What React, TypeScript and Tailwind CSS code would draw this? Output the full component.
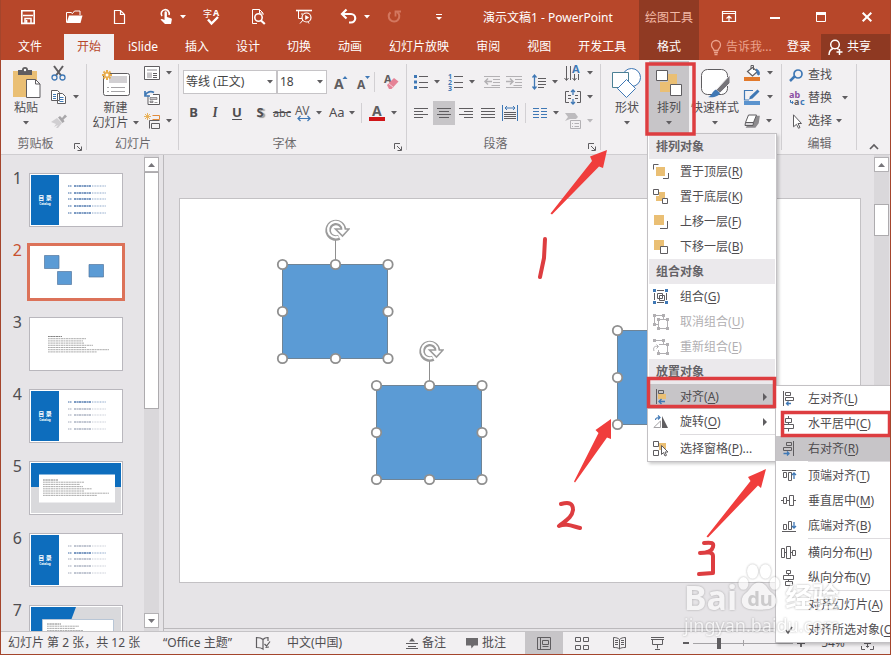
import type { ReactNode } from "react";

const G = "#5f5d60";
const B = "#3f78b5";
const Y = "#eabf74";

type IcoProps = { w: number; h: number; children: ReactNode; stroke?: string; className?: string };

function Ico({ w, h, children, stroke = G, className = "" }: IcoProps) {
  return (
    <svg width={w} height={h} viewBox={`0 0 ${w} ${h}`} fill="none" stroke={stroke} strokeWidth="1" className={`shrink-0 overflow-visible ${className}`} aria-hidden="true">
      {children}
    </svg>
  );
}

/* A letter that is part of an icon. */
function Letter({ x, y, size, color = G, bold = true, children }: { x: number; y: number; size: number; color?: string; bold?: boolean; children: string }) {
  return (
    <text x={x} y={y} fontSize={size} fontWeight={bold ? 700 : 400} fill={color} stroke="none">
      {children}
    </text>
  );
}

function Caret({ color = "#5f5d60" }: { color?: string }) {
  return (
    <svg width="6" height="4" viewBox="0 0 6 4" className="shrink-0" aria-hidden="true">
      <path d="M0 0h6L3 3.5z" fill={color} />
    </svg>
  );
}

/* ---------- title bar ---------- */

const quick: { name: string; icon: ReactNode; caret?: boolean }[] = [
  {
    name: "保存",
    icon: (
      <Ico w={20} h={18} stroke="#fff">
        <path d="M3.8 2.8h12.4v12.6H3.8z" strokeWidth="1.6" />
        <path d="M5 7.5h10M7 15v-4.5h6V15M8.6 12v3" strokeWidth="1.5" />
      </Ico>
    ),
  },
  {
    name: "打开",
    icon: (
      <Ico w={20} h={18} stroke="#fff">
        <path d="M2.5 14.5V4.5h5l1 1.5M8.5 5.5 10.5 3h5.5v4" />
        <path d="M2.5 15 5 7.500h13.500L16.500 15z" fill="#fff" stroke="none" />
      </Ico>
    ),
  },
  {
    name: "新建",
    icon: (
      <Ico w={20} h={18} stroke="#fff">
        <path d="M4.500 2.500h6l4 4v9h-10zM10.500 2.500v4h4" strokeWidth="1.200" />
      </Ico>
    ),
  },
  {
    name: "触摸/鼠标模式",
    caret: true,
    icon: (
      <Ico w={20} h={18} stroke="#fff">
        <path d="M6 8a4 4 0 1 1 7-1" strokeWidth="1.600" />
        <path d="M8.500 4.500a1.200 1.200 0 0 1 2.400 0V9l4 1.300c.8.3 1 .8.900 1.500L15 16H9l-4.500-4.500c.8-1 2-.8 4 .6z" fill="#fff" stroke="none" />
      </Ico>
    ),
  },
  {
    name: "拼写检查",
    icon: (
      <Ico w={20} h={18} stroke="#fff">
        <Letter x={1} y={9} size={9} color="#fff" bold={false}>字</Letter>
        <Letter x={11} y={8} size={9} color="#fff">A</Letter>
        <path d="m6 11.500 3.500 4 6.500-6.500" strokeWidth="2.400" />
      </Ico>
    ),
  },
  {
    name: "打印预览",
    icon: (
      <Ico w={20} h={18} stroke="#fff">
        <path d="M9 15.500H4.500v-14h7l3.500 3.500v2M11.500 1.500V5H15" />
        <circle cx="10.500" cy="9.500" r="3.700" strokeWidth="1.600" />
        <path d="m13 12.500 3.800 3.500" strokeWidth="2.200" />
      </Ico>
    ),
  },
  {
    name: "从头开始放映",
    icon: (
      <Ico w={20} h={18} stroke="#fff">
        <path d="M2 2.500h16" strokeWidth="1.600" />
        <path d="M4.500 3v7.500H8M6 15.500l3-3.500M7 6h2M15 15.500l-1-1.500" />
        <circle cx="12.500" cy="9.500" r="4.500" strokeWidth="1.200" />
        <path d="M11.200 7v5l4-2.500z" fill="#fff" stroke="none" />
      </Ico>
    ),
  },
  {
    name: "撤消",
    caret: true,
    icon: (
      <Ico w={20} h={18} stroke="#fff">
        <path d="M1.500 6h9.500a4 4 0 0 1 0 8.500H9M6.500 1.500 2 6l4.500 4.500" strokeWidth="2.200" />
      </Ico>
    ),
  },
  {
    name: "重复",
    icon: (
      <Ico w={20} h={18} stroke="#d3775f">
        <path d="M11 3.800a5.300 5.300 0 1 1-6.500.4" strokeWidth="2" />
        <path d="M9.500 8.500v-5H15" strokeWidth="1.800" />
      </Ico>
    ),
  },
  {
    name: "自定义快速访问工具栏",
    icon: (
      <Ico w={20} h={18} stroke="#fff">
        <path d="M4 6.500h6" />
        <path d="M4 9h6l-3 3z" fill="#fff" stroke="none" />
      </Ico>
    ),
  },
];

const tabs = ["iSlide", "插入", "设计", "切换", "动画", "幻灯片放映", "审阅", "视图", "开发工具"];

function Header() {
  return (
    <header className="flex h-[60px] shrink-0 bg-[#b7472a] text-white">
      <div className="flex min-w-0 flex-1 flex-col">
        <div className="flex h-[34px] items-center pl-1">
          {quick.map((q) => (
            <button key={q.name} aria-label={q.name} className="flex h-8 w-[46px] shrink-0 items-center gap-1 pl-[13px]">
              {q.icon}
              {q.caret && <Caret color="#fff" />}
            </button>
          ))}
          <h1 className="pt-0.5 pl-[18px] whitespace-nowrap">演示文稿1 - PowerPoint</h1>
        </div>
        <nav className="flex flex-1 gap-px whitespace-nowrap">
          <button className="w-[62px] shrink-0 pr-1">文件</button>
          <button className="shrink-0 bg-[#f2f0f2] px-[13px] text-[#b7472a]">开始</button>
          {tabs.map((t) => (
            <button key={t} className="shrink-0 px-[13px]">
              {t}
            </button>
          ))}
        </nav>
      </div>
      <div className="flex w-[60px] shrink-0 flex-col bg-[#903a23]">
        <span className="flex h-[34px] items-center justify-center pt-0.5 whitespace-nowrap text-[#f3b9a6]">绘图工具</span>
        <button className="flex-1">格式</button>
      </div>
      <div className="flex w-[191px] shrink-0 flex-col">
        <div className="flex h-[34px] items-center pl-[7px]">
          <button aria-label="功能区显示选项" className="flex w-[46px] justify-center">
            <Ico w={14} h={12} stroke="#fff">
              <path d="M.5.500h13v10H.500zM.500 2.500h13M7 10V5M4.500 7.500 7 5l2.500 2.500" strokeWidth="1.200" />
            </Ico>
          </button>
          <button aria-label="最小化" className="flex w-[46px] justify-center">
            <Ico w={10} h={4} stroke="#fff"><path d="M0 3h10" strokeWidth="2" /></Ico>
          </button>
          <button aria-label="最大化" className="flex w-[46px] justify-center">
            <Ico w={10} h={10} stroke="#fff"><path d="M.500 1h9v8.500h-9z" /><path d="M0 1.500h10" strokeWidth="3" /></Ico>
          </button>
          <button aria-label="关闭" className="flex w-[45px] justify-center">
            <Ico w={10} h={10} stroke="#fff"><path d="m.7.700 8.600 8.600M9.300.700.700 9.300" strokeWidth="2" /></Ico>
          </button>
        </div>
        <div className="flex flex-1 items-stretch">
          <button className="flex items-center gap-1 pl-[11px] whitespace-nowrap text-[#eba28c]">
            <Ico w={12} h={15} stroke="#eba28c">
              <path d="M4 10.500C4 8.500 1.500 8 1.500 5a4.500 4.500 0 0 1 9 0c0 3-2.500 3.500-2.500 5.500zM4 12.500h4M4.500 14.500h3" strokeWidth="1.300" />
            </Ico>
            告诉我...
          </button>
          <button className="ml-auto px-2.5 whitespace-nowrap">登录</button>
          <button className="flex w-[69px] items-center gap-1 bg-[#8e3922] pl-[7px] whitespace-nowrap">
            <Ico w={15} h={17} stroke="#fff">
              <circle cx="7" cy="5.500" r="4.300" strokeWidth="1.500" />
              <path d="M1 16c0-3.500 1.500-5.500 4-6.500M9 9l1.500 1.500M11.500 10v6M8.500 13h6" strokeWidth="1.500" />
            </Ico>
            共享
          </button>
        </div>
      </div>
    </header>
  );
}

/* ---------- ribbon ---------- */

function Group({ label, width, launcher, bare, children }: { label: string; width: string; launcher?: boolean; bare?: boolean; children: ReactNode }) {
  return (
    <section aria-label={label} className={`relative flex shrink-0 flex-col ${width}`}>
      <div className="flex h-[74px] pt-px">{children}</div>
      <div className="flex h-5 items-center text-[#6a686b]">
        {!bare && <span className="flex-1 text-center">{label}</span>}
        {launcher && (
          <button aria-label={`${label}设置`} className="flex w-[17px] pt-1.5 pl-1">
            <Ico w={8} h={8}>
              <path d="M.500 6V.500H6M3 3l4 4M7.500 3.500v4h-4" />
            </Ico>
          </button>
        )}
      </div>
      <div className="absolute top-1 right-0 h-[86px] w-px bg-[#d2d0d3]" />
    </section>
  );
}

function Tool({ name, icon, caret, w = "w-auto", on, dim }: { name: string; icon: ReactNode; caret?: boolean; w?: string; on?: boolean; dim?: boolean }) {
  return (
    <button aria-label={name} className={`flex h-6 shrink-0 items-center gap-1.5 ${w} ${on ? "justify-center bg-[#c7c5c8]" : ""}`}>
      {icon}
      {caret && <Caret color={dim ? "#b9b7ba" : "#5f5d60"} />}
    </button>
  );
}

function Big({ icon, text, last, w, on }: { icon: ReactNode; text: string; last?: string; w: string; on?: boolean }) {
  return (
    <button className={`flex shrink-0 flex-col items-center pt-1 leading-[15px] whitespace-nowrap ${w} ${on ? "bg-[#c7c5c8]" : ""}`}>
      <span className="flex h-[35px] items-center">{icon}</span>
      <span>{text}</span>
      <span className="flex h-[15px] items-center gap-1">
        {last}
        <Caret />
      </span>
    </button>
  );
}

const sun = "M5 0v10M0 5h10M1.500 1.500l7 7M8.500 1.500l-7 7";

function Lines({ rows, stroke = G }: { rows: [number, number][]; stroke?: string }) {
  return (
    <Ico w={14} h={12} stroke={stroke}>
      {rows.map(([a, b], i) => (
        <path key={i} d={`M${a} ${i * 3 + 1.5}H${b}`} />
      ))}
    </Ico>
  );
}

function Divider() {
  return <div className="h-5 w-px shrink-0 bg-[#d2d0d3]" />;
}

function Ribbon() {
  return (
    <div className="flex h-[95px] shrink-0 border-b border-[#cfcdd0] bg-[#f2f0f2]">
      <Group label="剪贴板" width="w-[86px]" launcher>
        <Big
          w="w-[50px]"
          text="粘贴"
          icon={
            <Ico w={30} h={31}>
              <path d="M2 4h24v26H2z" fill={Y} stroke="none" />
              <path d="M7 3h4a3 3 0 0 1 6 0h4v5H7z" fill={G} stroke="none" />
              <circle cx="14" cy="3" r="1.200" fill="#fff" stroke="none" />
              <path d="M15.500 12.500h9l4.500 4.500v13.500H15.500z" fill="#fff" />
              <path d="M24.500 12.500V17H29" />
            </Ico>
          }
        />
        <div className="flex flex-col">
          <Tool name="剪切" icon={
            <Ico w={16} h={16}>
              <path d="M3 1l7 9.500M12 1 5 10.500" strokeWidth="2" />
              <circle cx="3.500" cy="12.500" r="2.500" stroke={B} strokeWidth="1.300" />
              <circle cx="11.500" cy="12.500" r="2.500" stroke={B} strokeWidth="1.300" />
            </Ico>
          } />
          <Tool name="复制" caret icon={
            <Ico w={16} h={14}>
              <path d="M.500.500h6l2 2v8h-8zM6.500 3.500h5l3 3v7h-8z" fill="#fff" />
              <path d="M2 4.500h3M2 6.500h3M2 8.500h3M8.500 7.500h4M8.500 9.500h4M8.500 11.500h4" stroke={B} />
            </Ico>
          } />
          <Tool name="格式刷" icon={
            <Ico w={16} h={14} stroke="none">
              <path d="M0 8 6 4l5 5-4 5H5l2-3-4 2 2-3z" fill="#d0ced1" />
              <path d="m7 3.500 2-1.500 2 2 3-3.500 2 2-3.500 3 1 2-2 1.500z" fill="#a9a7aa" />
            </Ico>
          } />
        </div>
      </Group>

      <Group label="幻灯片" width="w-[92px]">
        <Big
          w="w-[57px]"
          text="新建"
          last="幻灯片"
          icon={
            <Ico w={30} h={28}>
              <rect x="2.500" y="4.500" width="26" height="22" rx="2" fill="#fff" />
              <path d="M8 7h18v7H8z" fill="#d2d0d3" stroke="none" />
              <path d="M6 18.500h2M10 18.500h14M6 22.500h2M10 22.500h14" stroke="#a5a3a6" />
              <path d={sun} stroke="#e9ad4d" strokeWidth="2" transform="translate(1 1)" />
              <circle cx="6" cy="6" r="1.500" fill="#fff" stroke="none" />
            </Ico>
          }
        />
        <div className="flex flex-col">
          <Tool name="版式" caret icon={
            <Ico w={16} h={14}>
              <path d="M.500.500h15v13H.500z" fill="#fff" />
              <path d="M3 3h10v2H3zM3 6.500h5V12H3z" fill="#c7c5c8" stroke="none" />
              <path d="M9 7.500h4M9 9.500h4M9 11.500h4" />
            </Ico>
          } />
          <Tool name="重置" icon={
            <Ico w={16} h={15}>
              <path d="M4 5.500V14.500h11.500V4.500H9" fill="#fff" />
              <path d="M6 7.500h7v2H6zM6 11h3v1.500H6zM10.500 12.500h3" fill="#c7c5c8" strokeWidth=".6" />
              <path d="M1 5.500C3 1.500 7 1 10 2.500M1 1v5h5" stroke={B} strokeWidth="1.700" />
            </Ico>
          } />
          <Tool name="节" caret icon={
            <Ico w={16} h={16}>
              <path d="M8.500 2.500h7v4h-7" stroke="#df8b3c" />
              <path d="M5.500 7.500v8M5.500 7.500h10M7.500 10.500h8v5h-8z" />
              <path d="M3.500 0v7M0 3.500h7M1 1l5 5M6 1 1 6" stroke="#e9ad4d" strokeWidth=".9" />
            </Ico>
          } />
        </div>
      </Group>

      <Group label="字体" width="w-[228px]" launcher>
        <div className="flex w-full flex-col pt-[9px] pl-1">
          <div className="flex h-6 items-center">
            <label className="relative flex">
              <select aria-label="字体" className="h-6 w-[94px] appearance-none border border-[#c6c4c7] bg-white pl-0.5 text-[#444]">
                <option>等线 (正文)</option>
              </select>
              <span className="pointer-events-none absolute top-2.5 right-1"><Caret /></span>
            </label>
            <label className="relative flex">
              <select aria-label="字号" className="h-6 w-[50px] appearance-none border border-[#c6c4c7] bg-white pl-0.5 text-[#444]">
                <option>18</option>
              </select>
              <span className="pointer-events-none absolute top-2.5 right-1"><Caret /></span>
            </label>
            <button aria-label="增大字号" className="flex w-[25px] justify-center pl-1">
              <Ico w={14} h={15}>
                <Letter x={0} y={14} size={14}>A</Letter>
                <path d="M8.500 4h5L11 1z" fill={B} stroke="none" />
              </Ico>
            </button>
            <button aria-label="减小字号" className="flex w-[23px] justify-center">
              <Ico w={13} h={15}>
                <Letter x={0} y={14} size={12}>A</Letter>
                <path d="M8 1h5l-2.500 3z" fill={B} stroke="none" />
              </Ico>
            </button>
            <Divider />
            <button aria-label="清除格式" className="flex w-8 justify-center">
              <Ico w={15} h={16}>
                <Letter x={0} y={9} size={11}>A</Letter>
                <path d="M3 11 10 4l4.500 3.500L7.500 15H5z" fill="#e58296" stroke="none" />
                <path d="m4.500 9.500 5 4" stroke="#f6d3da" />
              </Ico>
            </button>
          </div>
          <div className="mt-[7px] flex h-6 items-center text-[13px] font-bold">
            <button className="w-[21px]">B</button>
            <button className="w-[22px] font-serif italic">I</button>
            <button className="w-[22px] underline underline-offset-2">U</button>
            <button className="w-[24px] text-shadow-[2px_1px_1px_#999]">S</button>
            <button className="w-[20px] text-[11px] font-normal line-through">abc</button>
            <button aria-label="字符间距" className="flex w-[33px] items-center justify-center gap-1">
              <Ico w={16} h={16}>
                <Letter x={-1} y={10} size={12} bold={false}>AV</Letter>
                <path d="M2 13.500h12M11.500 11l2.500 2.500-2.500 2.500M4.500 11 2 13.500 4.500 16" stroke={B} strokeWidth="1.200" />
              </Ico>
              <Caret />
            </button>
            <button className="flex w-[36px] items-center gap-1 pl-1 font-normal">Aa<Caret /></button>
            <Divider />
            <button aria-label="字体颜色" className="flex items-center gap-1.5 pl-[7px]">
              <Ico w={16} h={15}>
                <Letter x={3} y={10} size={14}>A</Letter>
                <path d="M0 11h16v4H0z" fill="#d01518" stroke="none" />
              </Ico>
              <Caret />
            </button>
          </div>
        </div>
      </Group>

      <Group label="段落" width="w-[194px]" launcher>
        <div className="flex w-[158px] shrink-0 flex-col pt-[9px] pl-[7px]">
          <div className="flex h-6 items-center">
            <Tool name="项目符号" caret w="w-[34px]" icon={
              <Ico w={14} h={16}>
                <path d="M5 2.500h9M5 8.500h9M5 13.500h9" />
                <path d="M0 1h3v3H0zM0 6.500h3v3H0zM0 12h3v3H0z" fill={B} stroke="none" />
              </Ico>
            } />
            <Tool name="编号" caret w="w-[36px]" icon={
              <Ico w={15} h={16}>
                <path d="M6 2.500h9M6 8.500h9M6 13.500h9" />
                <Letter x={0} y={5} size={7} color={B}>1</Letter>
                <Letter x={0} y={11} size={7} color={B}>2</Letter>
                <Letter x={0} y={17} size={7} color={B}>3</Letter>
              </Ico>
            } />
            <Tool name="减少缩进" w="w-[22px]" icon={
              <Ico w={16} h={14} stroke="#b3b1b4">
                <path d="M0 1.500h16M9 4.500h7M9 7.500h7M0 12.500h16M7.500 10.500h8.500" />
                <path d="M1 6.500h7M4 3.500l-3 3 3 3" strokeWidth="1.500" />
              </Ico>
            } />
            <Tool name="增加缩进" w="w-[26px]" icon={
              <Ico w={16} h={14} stroke="#b3b1b4">
                <path d="M0 1.500h16M9 4.500h7M9 7.500h7M0 12.500h16M7.500 10.500h8.500" />
                <path d="M0 6.500h7M4 3.500l3 3-3 3" strokeWidth="1.500" />
              </Ico>
            } />
            <Tool name="行距" caret icon={
              <Ico w={14} h={16}>
                <path d="M6 4.500h8M6 7.500h8M6 10.500h8M6 13.500h6" />
                <path d="M2.500 1v14M.500 3.500l2-2.500 2 2.500M.500 12.500l2 2.500 2-2.500" stroke={B} strokeWidth="1.300" />
              </Ico>
            } />
          </div>
          <div className="mt-[7px] flex h-6 items-center">
            <Tool name="左对齐" w="w-[19px]" icon={<Lines rows={[[0, 14], [0, 9], [0, 14], [0, 9]]} />} />
            <Tool name="居中" w="w-[22px]" on icon={<Lines rows={[[0, 14], [2, 12], [0, 14], [2, 12]]} />} />
            <span className="w-1" />
            <Tool name="右对齐" w="w-[22px]" icon={<Lines rows={[[0, 14], [5, 14], [0, 14], [5, 14]]} />} />
            <Tool name="两端对齐" w="w-[21px]" icon={<Lines rows={[[0, 14], [0, 14], [0, 14], [0, 14]]} />} />
            <Tool name="分散对齐" w="w-[23px]" icon={
              <Ico w={16} h={16}>
                <path d="M2 7.500h12M2 9.500h12M2 11.500h12M2 13.500h12" />
                <path d="M.500 0v16M15.500 0v16M3 3h10M5 1 3 3l2 2M11 1l2 2-2 2" stroke={B} />
              </Ico>
            } />
            <Divider />
            <button aria-label="分栏" className="flex items-center gap-1.5 pl-[7px]">
              <Ico w={14} h={12} stroke={B}>
                <path d="M0 1.500h6M8 1.500h6M0 4.500h6M8 4.500h6M0 7.500h6M8 7.500h6M0 10.500h6M8 10.500h6" />
              </Ico>
              <Caret />
            </button>
          </div>
        </div>
        <div className="flex flex-col">
          <Tool name="文字方向" caret icon={
            <Ico w={16} h={16}>
              <path d="M1.500 1v14M5.500 1v14M9.500 9v6M13.500 9v6M-.500 13l2 2.500 2-2.500M7.500 13l2 2.500 2-2.500" />
              <Letter x={7} y={8} size={11} color={B}>A</Letter>
            </Ico>
          } />
          <Tool name="对齐文本" caret icon={
            <Ico w={16} h={16}>
              <path d="M4 2.500H.500v11H4M12 2.500h3.500v11H12M3 6.500h3M10 6.500h3M3 9.500h3M10 9.500h3" />
              <path d="M8 1v5M8 15v-5M6 3l2-2 2 2M6 13l2 2 2-2" stroke={B} strokeWidth="1.300" />
            </Ico>
          } />
          <Tool name="转换为 SmartArt" caret dim icon={
            <Ico w={16} h={16} stroke="#b3b1b4">
              <path d="M0 0h10l3 4-2 2H5L0 8l3-4z" fill="#bdbbbe" stroke="none" />
              <path d="M5.500 7.500h10v8h-10z" fill="#f2f0f2" />
              <path d="M7 10.500h1M9.500 10.500H14M7 13.500h1M9.500 13.500H14" />
            </Ico>
          } />
        </div>
      </Group>

      <Group label="绘图" width="w-[181px]" bare>
        <Big
          w="ml-1 w-[44px]"
          text="形状"
          icon={
            <Ico w={30} h={30} stroke={B}>
              <circle cx="19.500" cy="9.500" r="9" fill="#fff" />
              <path d="M.500 4.500h16v15h-16z" fill="#fff" stroke="#4b8095" />
              <path d="M14.500 11.500 23.500 20.500 14.500 29.500 5.500 20.500z" fill="#fff" />
            </Ico>
          }
        />
        <Big
          w="w-[40px]"
          on
          text="排列"
          icon={
            <Ico w={28} h={28}>
              <path d="M13 5h9v10h-5v8H5V13h8z" fill={Y} stroke="none" />
              <path d="M1.500 1.500h11v10h-11zM15.500 15.500h11v11h-11z" fill="#fff" />
            </Ico>
          }
        />
        <Big
          w="w-[52px]"
          text="快速样式"
          icon={
            <Ico w={32} h={30}>
              <rect x="2.500" y="1.500" width="26" height="25" rx="6" fill="#fff" />
              <path d="M31 7v8L21 25l-4-3z" fill="#77757a" stroke="#f2f0f2" />
              <path d="M9 29c4-1 4-6 8-7.500l4 3.500c-1 3-6 5-12 4z" fill={B} stroke="none" />
            </Ico>
          }
        />
        <div className="flex flex-col pl-[3px]">
          <Tool name="形状填充" caret icon={
            <Ico w={17} h={16}>
              <path d="m3.500 6.500 5-4 5 4-5 4.500z" fill="#fff" strokeWidth="1.200" />
              <path d="M7 4V.500h2.500V5" />
              <path d="M12 4c3 1 4 4 3 6-2 0-2-2-2-3.500z" fill={B} stroke={B} />
              <path d="M0 12h16v4H0z" fill="#e2792b" stroke="none" />
            </Ico>
          } />
          <Tool name="形状轮廓" caret icon={
            <Ico w={17} h={16}>
              <path d="M9 1.500H.500v9.500H5" stroke={B} strokeWidth="1.200" />
              <path d="m5 10.500 1-3L13.500.500 15.500 2.500 8.500 9.500z" fill={B} stroke="none" />
              <path d="M0 12h16v4H0z" fill="#5b93ce" stroke="none" />
            </Ico>
          } />
          <Tool name="形状效果" caret icon={
            <Ico w={16} h={14}>
              <path d="M5 2.500h10L14 9l-3 4H3l2-3z" fill="#8d8b8e" stroke="#8d8b8e" strokeWidth="1.500" />
              <path d="M4.500 1h8l-3 7.500h-8z" fill="#fff" />
              <path d="M1.500 8.500h8l-.5 3H1z" fill="#d9d7da" />
            </Ico>
          } />
        </div>
      </Group>

      <Group label="编辑" width="w-[75px]">
        <div className="flex flex-col pl-[7px] whitespace-nowrap">
          <button className="flex h-6 items-center gap-1 pt-1">
            <Ico w={15} h={13}><circle cx="9" cy="5" r="4" stroke={B} strokeWidth="1.700" /><path d="m1 12 5-5" stroke={B} strokeWidth="2.500" /></Ico>
            查找
          </button>
          <button className="flex h-6 items-center gap-1 pt-0.5">
            <Ico w={15} h={15}>
              <Letter x={0} y={7} size={9} color="#8b4fa3">ab</Letter>
              <Letter x={5} y={14} size={9}>a</Letter>
              <Letter x={11} y={14} size={9} color={B}>c</Letter>
              <path d="M1.500 9v2.500h2.500M3 10l1.200 1.500L3 13" stroke={B} />
            </Ico>
            替换
            <span className="pl-1.5"><Caret /></span>
          </button>
          <button className="flex h-[23px] items-center gap-1 pt-px">
            <Ico w={15} h={15}><path d="M4.500.800v12l3-2.500 2 4 1.500-.8-2-4h3.500z" fill="#fff" /></Ico>
            选择
            <Caret />
          </button>
        </div>
      </Group>

      <div className="flex flex-1 items-end justify-center pb-1">
        <button aria-label="折叠功能区">
          <Ico w={10} h={7}><path d="m1 6 4-4 4 4" strokeWidth="1.700" /></Ico>
        </button>
      </div>
    </div>
  );
}

/* ---------- slide thumbnails ---------- */

function Agenda({ strong }: { strong: number[] }) {
  return (
    <div className="flex h-full p-px">
      <div className="flex w-[28px] flex-col items-center justify-center bg-[#0d6dbd] text-white">
        <span className="text-[6px] leading-[7px] font-bold">目 录</span>
        <span className="text-[3px] leading-[4px] font-bold">Catalog</span>
      </div>
      <svg viewBox="0 0 62 50" className="flex-1" aria-hidden="true">
        {[11, 18, 24, 31, 38].map((y, i) => (
          <g key={y} stroke={strong.includes(i) ? "#3c6aa5" : "#a3aabb"}>
            <path d={`M9 ${y}h4`} strokeWidth="1" strokeDasharray="1.500 .5" />
            <path d={`M15 ${y}h17`} strokeWidth="1.600" strokeDasharray="2.500 .6 1.500 .4" opacity=".9" />
            <path d={`M33 ${y}h14`} strokeWidth="1" strokeDasharray="1 .6" opacity=".6" />
          </g>
        ))}
      </svg>
    </div>
  );
}

function Para({ x, y, widths }: { x: number; y: number; widths: number[] }) {
  return (
    <g stroke="#666">
      {widths.map((w, i) => (
        <path key={i} d={`M${x} ${y + i * 2.2}h${w}`} strokeWidth=".9" strokeDasharray="1.800 .5 2.500 .4" opacity={i === 0 ? 0.9 : 0.6} />
      ))}
    </g>
  );
}

const thumbs: ReactNode[] = [
  <Agenda strong={[0, 1, 2, 3, 4]} />,
  <svg viewBox="0 0 92 52" className="h-full w-full" aria-hidden="true">
    <path d="M14.500 9.500h14.500v13H14.500zM27.500 25.500h14v13h-14zM59 18.500h14.500v12.500H59z" fill="#5b9bd5" stroke="#54779d" strokeWidth=".7" />
  </svg>,
  <svg viewBox="0 0 92 52" className="h-full w-full" aria-hidden="true">
    <Para x={18} y={18.5} widths={[14, 38, 35, 36, 45, 38, 61, 49]} />
  </svg>,
  <Agenda strong={[0]} />,
  <svg viewBox="0 0 92 52" className="h-full w-full" aria-hidden="true">
    <path d="M1 1h90v50H1z" fill="#d9d9dc" />
    <path d="M1 1h90v24H1z" fill="#0d6dbd" />
    <path d="M9 12.500h76v28H9z" fill="#fff" />
    <Para x={13} y={18} widths={[15, 41, 37, 40, 49, 41, 66, 54]} />
  </svg>,
  <Agenda strong={[1]} />,
  <svg viewBox="0 0 92 52" className="h-full w-full" aria-hidden="true">
    <path d="M1 1h90v50H1z" fill="#d9d9dc" />
    <path d="M1 1h45l-6 16v34H1z" fill="#0d6dbd" />
    <path d="M12.500 13.500h71v38h-71z" fill="#fff" stroke="#b8c6d6" />
    <Para x={17} y={18} widths={[14, 32, 28, 36, 45]} />
  </svg>,
];

function Thumbnails() {
  return (
    <aside className="flex w-[163px] shrink-0 border-r border-[#bbb9bc]">
      <ol className="flex flex-1 flex-col gap-3.5 overflow-hidden pt-4">
        {thumbs.map((t, i) => (
          <li key={i} className="flex h-[58px] shrink-0">
            <span className={`w-[21px] text-right text-base leading-[14px] ${i === 1 ? "text-[#c8502f]" : "text-[#4f4d50]"}`}>{i + 1}</span>
            <button
              aria-label={`幻灯片 ${i + 1}`}
              className={
                i === 1
                  ? "ml-[5px] h-[58px] w-[98px] border-[3px] border-[#dc7259] bg-white"
                  : "my-0.5 ml-[7px] h-[54px] w-[94px] border border-[#b9b7bd] bg-white"
              }
            >
              {t}
            </button>
          </li>
        ))}
      </ol>
      <div className="mr-1 flex w-[15px] flex-col bg-[#dad8db] pt-0.5 pb-[3px]">
        <ScrollButton name="向上" up />
        <div className="h-[237px] border border-[#adabae] bg-white" />
        <div className="flex-1" />
        <ScrollButton name="向下" />
      </div>
    </aside>
  );
}

function ScrollButton({ name, up }: { name: string; up?: boolean }) {
  return (
    <button aria-label={name} className="flex h-[15px] items-center justify-center border border-[#b3b1b4] bg-white">
      <svg width="7" height="4" viewBox="0 0 7 4" aria-hidden="true">
        <path d={up ? "M0 4h7L3.5 0z" : "M0 0h7L3.5 4z"} fill="#77757a" />
      </svg>
    </button>
  );
}

/* ---------- slide canvas ---------- */

function Rotator({ place }: { place: string }) {
  return (
    <svg width="26" height="24" viewBox="0 0 26 24" fill="none" className={`absolute ${place}`} aria-hidden="true">
      <path d="M15.200 18.200A7.700 7.700 0 1 1 19.500 10.500" stroke="#9b9b9b" strokeWidth="5.600" />
      <path d="M11.500 10h13.500L18.500 17z" fill="#fff" stroke="#9b9b9b" strokeWidth="1.600" />
      <path d="M14.500 17.800A7.700 7.700 0 1 1 19.500 10.500l-.5 2" stroke="#fff" strokeWidth="2.200" />
    </svg>
  );
}

function Selected({ place, turn }: { place: string; turn?: boolean }) {
  const dots = [[7.5, 35.5], [60.5, 35.5], [113, 35.5], [7.5, 82.5], [113, 82.5], [7.5, 129.5], [60.5, 129.5], [113, 129.5]];
  return (
    <div className={`absolute h-[136px] w-[120px] ${place}`}>
      <svg width="120" height="136" viewBox="0 0 120 136" aria-hidden="true">
        <path d="M7.500 35.500h105v94h-105z" fill="#5b9bd5" stroke="#6f8496" />
        {turn && <path d="M60.500 10v24" stroke="#8f8f8f" />}
        {dots.map(([x, y]) => (
          <circle key={`${x}-${y}`} cx={x} cy={y} r="4.700" fill="#fff" stroke="#8f8f8f" strokeWidth="1.800" />
        ))}
      </svg>
      {turn && <Rotator place="-top-2.5 left-[49px]" />}
    </div>
  );
}

function Canvas() {
  return (
    <main className="flex min-w-0 flex-1 flex-col">
      <div className="flex flex-1 border-b border-[#bbb9bc]">
        <div className="relative mt-[43px] mr-[13px] mb-[45px] ml-[15px] flex-1 overflow-hidden border border-[#c3c1c4] bg-white">
          <Selected place="left-[95px] top-[30px]" turn />
          <Selected place="left-[189px] top-[151px]" turn />
          <Selected place="left-[430px] top-[96px]" />
        </div>
        <div className="mr-px flex w-[15px] flex-col bg-[#dad8db] pt-0.5">
          <ScrollButton name="向上滚动" up />
          <div className="h-8" />
          <div className="h-8 border border-[#adabae] bg-white" />
        </div>
      </div>
      <div className="h-0.5" />
    </main>
  );
}

/* ---------- status bar ---------- */

function StatusBar() {
  return (
    <footer className="flex h-[23px] shrink-0 items-center border-t border-[#c5c3c6] bg-[#f2f0f2] whitespace-nowrap">
      <span className="w-[156px] pl-[7px]">幻灯片 第 2 张，共 12 张</span>
      <span className="w-[99px] pl-1.5">“Office 主题”</span>
      <button aria-label="校对" className="w-[31px]">
        <Ico w={14} h={14}>
          <path d="M7 3.500C5 1.500 3 1.500.500 1.500v10c2.500 0 4.500 0 6.500 1.500V3.500c1-1.200 3-2 5-2V5M9.500 11.500c1-.5 2-.5 3.500-.5M8.500 8l2 2 3.500-4.500" strokeWidth="1.200" />
        </Ico>
      </button>
      <button>中文(中国)</button>
      <div className="ml-auto flex h-full items-center">
        <button className="flex items-center gap-1">
          <Ico w={12} h={12}><path d="M0 6.500h12M2 9.500h8M0 11.500h12" /><path d="M3 4.500 6 1l3 3.500z" fill={G} stroke="none" /></Ico>
          备注
        </button>
        <button className="ml-5 flex items-center gap-1">
          <Ico w={12} h={12}><path d="M0 1h12v7.500H8L5.500 11.500 5 8.500H0z" fill="#6c6a6d" stroke="none" /></Ico>
          批注
        </button>
        <button aria-label="普通视图" className="ml-[19px] flex h-full w-[38px] items-center justify-center bg-[#c7c5c8]">
          <Ico w={14} h={13}><path d="M.500.500h13v12H.500zM3.500.500v12M5.500 3.500h6v4h-6zM5.500 9.500h6" /></Ico>
        </button>
        <button aria-label="幻灯片浏览" className="flex w-[38px] justify-center">
          <Ico w={14} h={13}><path d="M.500.500h5v4h-5zM8.500.500h5v4h-5zM.500 8.500h5v4h-5zM8.500 8.500h5v4h-5z" /></Ico>
        </button>
        <button aria-label="阅读视图" className="flex w-[37px] justify-center">
          <Ico w={13} h={13}><path d="M6.500 2.500C5 1 3 .500.500.500v10c2.500 0 4.500 0 6 1.500 1.500-1.500 3.500-1.500 6-1.500V.500c-2.500 0-4.500.500-6 2zM6.500 2.500V12M2 3.500h3M2 5.500h3M2 7.500h3M8 3.500h3M8 5.500h3M8 7.500h3" /></Ico>
        </button>
        <button aria-label="幻灯片放映" className="flex w-[39px] justify-center">
          <Ico w={13} h={13}><path d="M0 .500h13M0 2.500h13M1.500 2.500v5h10v-5M6.500 7.500v4M4 12.500h5" /></Ico>
        </button>
        <button aria-label="缩小" className="ml-1.5 flex">
          <Ico w={6} h={6}><path d="M0 3h6" strokeWidth="2" /></Ico>
        </button>
        <div className="relative ml-1 flex h-full w-[100px] items-center">
          <div className="absolute left-1/2 h-1.5 w-px bg-[#a5a3a6]" />
          <input
            type="range"
            min={0}
            max={100}
            defaultValue={25}
            aria-label="显示比例"
            className="relative h-px w-full appearance-none bg-[#a5a3a6] [&::-webkit-slider-thumb]:h-[11px] [&::-webkit-slider-thumb]:w-1 [&::-webkit-slider-thumb]:appearance-none [&::-webkit-slider-thumb]:bg-[#5f5d60]"
          />
        </div>
        <button aria-label="放大" className="ml-1 flex">
          <Ico w={8} h={8}><path d="M0 4h8M4 0v8" strokeWidth="1.800" /></Ico>
        </button>
        <span className="w-14 text-center">54%</span>
        <button aria-label="适应窗口" className="mr-4 flex">
          <Ico w={13} h={13}><path d="M.500 4V.500H4M9 .500h3.500V4M12.500 9v3.500H9M4 12.500H.500V9M6.500 3v7M3 6.500h7M5 9l1.500 1.500L8 9" /></Ico>
        </button>
      </div>
    </footer>
  );
}

/* ---------- menus ---------- */

type Item = { kind: "head" | "item" | "line"; text?: string; k?: string; tail?: string; icon?: ReactNode; off?: boolean; on?: boolean; more?: boolean };

const nodes = (c: string) => <path d="M0 0h3v3H0zM12 0h3v3h-3zM0 12h3v3H0zM12 12h3v3h-3z" fill={c} stroke="none" />;

const arrange: Item[] = [
  { kind: "head", text: "排列对象" },
  { kind: "item", text: "置于顶层", k: "R", icon: <Ico w={16} h={16}><path d="M5.500.500h-5v5M15.500 9v5.500H10" /><path d="M3 3h9v9H3z" fill={Y} stroke="none" /></Ico> },
  { kind: "item", text: "置于底层", k: "K", icon: <Ico w={16} h={16}><path d="M6 3h6v6H9v3H3V7h3z" fill={Y} stroke="none" /><path d="M.500.500h5v5h-5zM9.500 9.500h5v5h-5z" fill="#fff" /></Ico> },
  { kind: "item", text: "上移一层", k: "F", icon: <Ico w={16} h={16}><path d="M1 1h10v10H1z" fill={Y} stroke="none" /><path d="M14.500 7v7.500H7" /></Ico> },
  { kind: "item", text: "下移一层", k: "B", icon: <Ico w={16} h={16}><path d="M1 1h10v10H1z" fill={Y} stroke="none" /><path d="M7.500 7.500h7v7h-7z" fill="#fff" /></Ico> },
  { kind: "head", text: "组合对象" },
  { kind: "item", text: "组合", k: "G", icon: <Ico w={16} h={16}>{nodes(B)}<path d="M4 1.500h7M4 13.500h7M1.500 4v7M13.500 4v7M4.500 4.500h5v5h-5zM6.500 6.500h5v5h-5z" /></Ico> },
  { kind: "item", text: "取消组合", k: "U", off: true, icon: <Ico w={16} h={16} stroke="#b1afb2"><path d="M1.500 1.500h9v4M1.500 1.500v9h4M5.500 5.500h9v9h-9z" /><path d="M0 0h3v3H0zM9 0h3v3H9zM0 9h3v3H0zM4 4h3v3H4zM13 4h3v3h-3zM4 13h3v3H4zM13 13h3v3h-3z" fill="#b1afb2" stroke="none" /></Ico> },
  { kind: "item", text: "重新组合", k: "E", off: true, icon: <Ico w={16} h={16} stroke="#b1afb2"><path d="M1.500 1.500h9v4M6 5.500h8.500v9h-9V11M1 12c-1-3 0-5.500 4-4.500M3.500 5.500l2 2-2 2" /><path d="M0 0h3v3H0zM9 0h3v3H9zM13 4h3v3h-3zM4 13h3v3H4zM13 13h3v3h-3z" fill="#b1afb2" stroke="none" /></Ico> },
  { kind: "head", text: "放置对象" },
  { kind: "item", text: "对齐", k: "A", on: true, more: true, icon: <Ico w={16} h={16}><path d="M5 5h8v5H5z" fill={Y} stroke="none" /><path d="M3.500 0v15M5.500 1.500h5v3h-5z" /><path d="M6 12.500h6M8.500 10 6 12.500 8.500 15" stroke={B} strokeWidth="1.400" /></Ico> },
  { kind: "item", text: "旋转", k: "O", more: true, icon: <Ico w={16} h={14}><path d="M9 1v12h6z" fill={G} stroke="none" /><path d="M7.500 6v6.500H.800z" stroke="#a5a3a6" /><path d="M2.500 5c0-2 2-2.500 4-2.500M5 .500l2 2-2 2" stroke={B} strokeWidth="1.200" /></Ico> },
  { kind: "line" },
  { kind: "item", text: "选择窗格", k: "P", tail: "...", icon: <Ico w={16} h={16}><path d="M6 2h7v7H6z" fill={Y} stroke="none" /><path d="M.500.500h5v5h-5zM.500 9.500h5v5h-5z" fill="#fff" /><path d="M8.500 4.500v9l2-2 1.500 3.500 1.500-.7-1.500-3.300h3z" fill="#fff" /></Ico> },
];

const align: Item[] = [
  { kind: "item", text: "左对齐", k: "L", icon: <Ico w={16} h={16}><path d="M2.500 0v15M4.500 1.500h5v3h-5zM4.500 6.500h8v3h-8z" /><path d="M5 12.500h5M7.500 10.500l-2 2 2 2" stroke={B} strokeWidth="1.300" /></Ico> },
  { kind: "item", text: "水平居中", k: "C", icon: <Ico w={16} h={16}><path d="M7.500 0v2M7.500 6v2.500M7.500 12.500v3M4.500 2.500h6v4h-6zM2.500 8.500h10v4h-10z" /></Ico> },
  { kind: "item", text: "右对齐", k: "R", on: true, icon: <Ico w={16} h={16}><path d="M12.500 0v15M5.500 1.500h5v3h-5zM2.500 6.500h8v3h-8z" /><path d="M2.500 12.500h6M6 10.500l2 2-2 2" stroke={B} strokeWidth="1.300" /></Ico> },
  { kind: "line" },
  { kind: "item", text: "顶端对齐", k: "T", icon: <Ico w={16} h={16}><path d="M1 2.500h14M2.500 4.500h3v5h-3zM7.500 4.500h3v8h-3z" /><path d="M13 5v6M11 7l2-2 2 2" stroke={B} strokeWidth="1.300" /></Ico> },
  { kind: "item", text: "垂直居中", k: "M", icon: <Ico w={16} h={16}><path d="M0 7.500h2.500M5.500 7.500h3M12.500 7.500H15M2.500 4.500h3v6h-3zM8.500 2.500h4v10h-4z" /></Ico> },
  { kind: "item", text: "底端对齐", k: "B", icon: <Ico w={16} h={16}><path d="M1 13.500h14M2.500 6.500h3v5h-3zM7.500 3.500h3v8h-3z" /><path d="M13 4v6M11 8l2 2 2-2" stroke={B} strokeWidth="1.300" /></Ico> },
  { kind: "line" },
  { kind: "item", text: "横向分布", k: "H", icon: <Ico w={16} h={16}><path d="M.500 3.500h3v9h-3zM5.500 1.500h4v12h-4zM11.500 5.500h3v5h-3zM3.500 7.500h2M9.500 7.500h2" /></Ico> },
  { kind: "item", text: "纵向分布", k: "V", icon: <Ico w={16} h={16}><path d="M5.500.500h4v3h-4zM2.500 5.500h10v4h-10zM4.500 11.500h7v4h-7zM7.500 3.500v2M7.500 9.500v2" /></Ico> },
  { kind: "line" },
  { kind: "item", text: "对齐幻灯片", k: "A" },
  { kind: "item", text: "对齐所选对象", k: "O", icon: <Ico w={16} h={16}><path d="m4.500 8 2.500 3 4-6" strokeWidth="1.600" /></Ico> },
];

function Menu({ items, place }: { items: Item[]; place: string }) {
  return (
    <div role="menu" className={`absolute border border-[#c3c1c4] bg-white shadow-[2px_2px_3px_rgba(0,0,0,0.2)] ${place}`}>
      {items.map((it, i) => {
        if (it.kind === "line") return <div key={i} className="flex h-0.5 pl-8"><div className="h-px flex-1 bg-[#dedcdf]" /></div>;
        if (it.kind === "head") return <div key={i} className="mx-px flex h-[25px] items-center bg-[#ebe9ec] pl-[7px] font-bold text-[#646266]">{it.text}</div>;
        return (
          <button
            key={i}
            role="menuitem"
            disabled={it.off}
            className={`flex h-[25px] w-full items-center whitespace-nowrap ${it.on ? "bg-[#c7c5c8]" : ""} ${it.off ? "text-[#b1afb2]" : "text-[#4f4d50]"}`}
          >
            <span className="flex w-8 shrink-0 pl-[5px]">{it.icon}</span>
            <span>
              {it.text}(<u className="underline-offset-2">{it.k}</u>){it.tail}
            </span>
            {it.more && (
              <svg width="4" height="8" viewBox="0 0 4 8" className="mr-[9px] ml-auto" aria-hidden="true">
                <path d="M0 0l4 4-4 4z" fill="#5f5d60" />
              </svg>
            )}
          </button>
        );
      })}
    </div>
  );
}

/* ---------- hand-drawn notes and watermark ---------- */

function Notes() {
  return (
    <svg width="891" height="655" viewBox="0 0 891 655" fill="none" stroke="#dd3d40" className="pointer-events-none absolute top-0 left-0" aria-hidden="true">
      <path d="M647 64h47v70h-47zM648.500 378.500h126v28h-126zM782.500 412.500h107v23h-107z" strokeWidth="3.500" />
      <g fill="#f03d3c" stroke="none">
        <path d="M607 150 603 168 599 166.500 552 214.500 550.500 213.500 592 161 590 156.500z" />
        <path d="M611 419 611 439 607 437.500 575 482.500 574 481.500 598.500 433 595.500 430z" />
        <path d="M766 469 761 488 758 485.500 708 537.500 706.500 536.500 750.500 481 748 477z" />
      </g>
      <g strokeWidth="4" strokeLinecap="round" strokeLinejoin="round">
        <path d="M545 239 544 258 540 277" />
        <path d="M561 504c8-2 12-1 12 6-1 8-8 11-14 16 7-3 13 0 21 2" />
        <path d="M704 543c8-1 10 0 9 4-1 4-5 6-13 6 8-1 13-1 13 3v17l-14 1" />
      </g>
    </svg>
  );
}

function Watermark() {
  return (
    <div className="pointer-events-none absolute top-[559px] left-[684px] w-[160px] text-white opacity-60 drop-shadow-[0_0_1px_rgba(90,90,90,0.75)]">
      <div className="flex h-[56px] items-end">
        <span className="text-[34px] leading-9 font-bold">Bai</span>
        <div className="relative h-[54px] w-[44px]">
          <svg width="44" height="54" viewBox="0 0 48 54" fill="#fff" aria-hidden="true">
            <ellipse cx="7" cy="22" rx="5.500" ry="7" />
            <ellipse cx="17" cy="9" rx="6" ry="8" />
            <ellipse cx="31" cy="9" rx="6" ry="8" />
            <ellipse cx="41" cy="22" rx="5.500" ry="7" />
            <path d="M24 21c8 0 9 8 15 12 6 5 5 15-4 17-7 1-15 1-22 0-9-2-10-12-4-17 6-4 7-12 15-12z" />
          </svg>
          <span className="absolute bottom-1 left-2.5 text-xl leading-6 font-bold text-[#bbb]">du</span>
        </div>
        <span className="pl-1 text-[27px] leading-9 font-bold whitespace-nowrap">经验</span>
      </div>
      <div className="text-lg leading-5">jingyan.baidu.com</div>
    </div>
  );
}

export default function App() {
  return (
    <div className="relative flex h-screen flex-col overflow-hidden border-x border-b border-[#a4452c] bg-[#e6e4e7] font-['Noto_Sans','Noto_Sans_CJK_SC',sans-serif] text-xs text-[#4f4d50]">
      <Header />
      <Ribbon />
      <div className="flex min-h-0 flex-1">
        <Thumbnails />
        <Canvas />
      </div>
      <StatusBar />
      <Menu items={arrange} place="top-[133px] left-[646px] w-[130px]" />
      <Menu items={align} place="top-[385px] left-[774px] w-[130px]" />
      <div className="pointer-events-none absolute inset-0 -left-px">
        <Notes />
        <Watermark />
      </div>
    </div>
  );
}
